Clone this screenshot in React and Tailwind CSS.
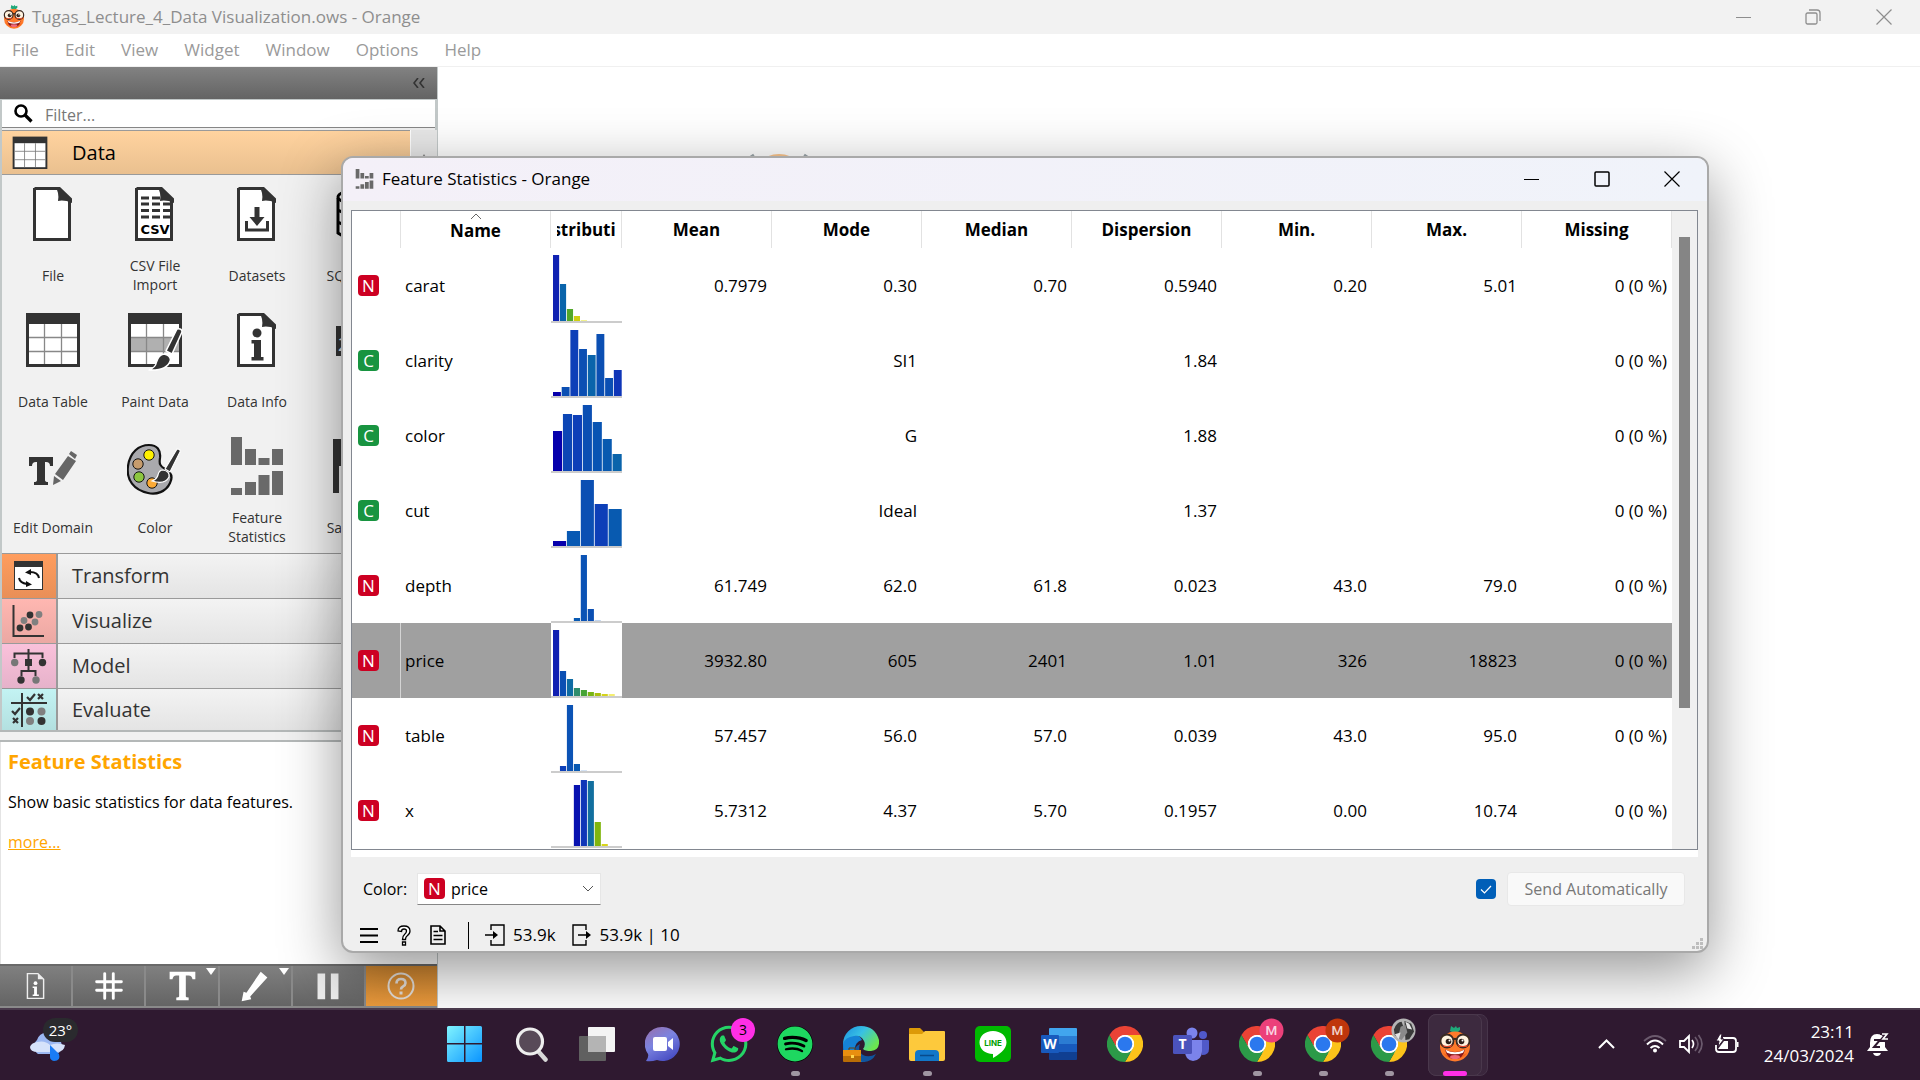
import React from "react";
import { FaSpotify, FaWhatsapp, FaLine } from "react-icons/fa";

const DARK = "#333333";

function OrangeMascot({ className }) {
  return (
    <svg viewBox="0 0 36 36" className={className} aria-hidden="true">
      <path d="M13 5l1-5 3 2 2-2 1 2 3-1v3l-2 2h-6z" fill="#1fa97a" />
      <circle cx="18" cy="20.5" r="15" fill="#ff7a2a" />
      <path d="M6 27a15 15 0 0 0 24 0l-6 3H12z" fill="#f0601c" />
      <path d="M8 23.5q10 5 20 0-2 9.500-10 9.500T8 23.500z" fill="#8a1a1a" />
      <path d="M8.500 23.800q9.500 5 19 0l-1.500 3q-8 3-16 0z" fill="#fff" />
      <ellipse cx="18" cy="31" rx="5" ry="2" fill="#f06a7a" />
      <circle cx="10" cy="15" r="6.500" fill="#fff3e0" stroke="#3a2a22" strokeWidth="1.800" />
      <circle cx="26" cy="15" r="6.500" fill="#fff3e0" stroke="#3a2a22" strokeWidth="1.800" />
      <path d="M4.500 18q5.500 4 11 0l-1.500 3H7zM20.500 18q5.500 4 11 0l-2 3H22z" fill="#e2462a" />
      <path d="M16 14q2-2.500 4 0" fill="none" stroke="#3a2a22" strokeWidth="1.800" />
      <circle cx="11.500" cy="15.500" r="2.800" fill="#30221c" />
      <circle cx="24.500" cy="15.500" r="2.800" fill="#30221c" />
      <circle cx="12.500" cy="14.500" r="1" fill="#fff" />
      <circle cx="25.500" cy="14.500" r="1" fill="#fff" />
    </svg>
  );
}

function Page({ children }) {
  return (
    <svg viewBox="0 0 54 56" className="w-[54px] h-14" aria-hidden="true">
      <path d="M8 2h24l13 13v39H8z" fill="#fff" />
      <path d="M8.500 2.500H32M8.500 2v51.500h35V14" fill="none" stroke={DARK} strokeWidth="3" />
      <path d="M29 1h5l12 11.500V17q-8-3.500-14-2 1.500-9-3-14z" fill={DARK} />
      {children}
    </svg>
  );
}

function GridIcon({ small, paint }) {
  return (
    <svg viewBox="0 0 56 60" className={small ? "w-9 h-9 mt-0.5" : "w-14 h-[60px] mt-1"} preserveAspectRatio="none" aria-hidden="true">
      <rect x="1" y="1" width="54" height="54" fill={DARK} />
      <rect x="4" y="12" width="48" height="40" fill="#fff" />
      {paint && <rect x="4" y="25" width="48" height="15" fill="#b0b0b0" />}
      <path d="M4 25.500h48M4 39.500h48M19.500 12v40M36.500 12v40" stroke={small ? "#777" : "#888"} strokeWidth="1.300" fill="none" />
      {paint && (
        <g stroke="#fff" strokeWidth="1.500" fill={DARK}>
          <path d="M50 17q5-1 5 3L45 42l-6-3z" />
          <path d="M37 42q6 1 6.500 6-3 11-22 10 7-2 8-8 2-7 7.500-8z" />
        </g>
      )}
    </svg>
  );
}

function EditDomainIcon() {
  return (
    <svg viewBox="0 0 56 56" className="w-14 h-14 mt-2" aria-hidden="true">
      <path d="M4 15h24v9h-3q0-4-4-4h-1v18q0 2 3 2v3H9v-3q3 0 3-2V20h-1q-4 0-4 4H4z" fill={DARK} />
      <path d="M29 34l7 5-8 4zM30 32l13-18 8 5-13 19zM44 12l2-3 6 4-2 4z" fill="#666" />
    </svg>
  );
}

function PaletteIcon() {
  return (
    <svg viewBox="0 0 56 56" className="w-14 h-14 mt-2" aria-hidden="true">
      <path d="M21 3C29 3 33 8 32 16c-1 6 0 8 5 11 6 3 8 8 5 14-4 9-14 12-22 10C6 48-2 38 0 24 2 10 11 3 21 3z" fill="#a9a9ad" stroke="#111" strokeWidth="2.200" transform="translate(1 0)" />
      <circle cx="22" cy="13" r="5.200" fill="#fff200" stroke="#111" />
      <circle cx="11" cy="22" r="5.200" fill="#c69c6d" stroke="#111" />
      <circle cx="12" cy="35" r="5.200" fill="#8cc63f" stroke="#111" />
      <circle cx="25" cy="41" r="5.200" fill="#fbaa36" stroke="#111" />
      <g fill={DARK} stroke="#fff" strokeWidth="1.200">
        <path d="M50 7q4 0 3 3L43 30l-5-3z" />
        <path d="M36 28q7 1 6 7-4 8-17 4 5-2 6-6 1-5 5-5z" />
      </g>
    </svg>
  );
}

function StatsIcon({ className }) {
  return (
    <svg viewBox="0 0 52 59" className={className} aria-hidden="true">
      <path fill="#696969" d="M0 0h11v28H0zM14 12h11v16H14zM27.500 21h11v7h-11zM41 12h11v16H41zM0 51h11v7H0zM14 45h11v13H14zM27.500 38h11v20h-11zM41 34h11v24H41z" />
    </svg>
  );
}

const tools = [
  { label: "File", icon: <Page /> },
  {
    label: "CSV File Import",
    icon: (
      <Page>
        <path d="M13 12h8M13 18h8M13 24.500h8M13 31h8M24 12h8M24 18h8M24 24.500h8M24 31h8M35 18h7M35 24.500h7M35 31h7" stroke={DARK} strokeWidth="3" />
        <text x="27" y="48" textAnchor="middle" fontSize="13" fontWeight="700" fontFamily="DejaVu Sans" fill="#000">CSV</text>
      </Page>
    ),
  },
  {
    label: "Datasets",
    icon: (
      <Page>
        <path d="M24.500 21h5v10h5L27 40l-7.500-9h5z" fill={DARK} />
        <path d="M16.500 35v9h21v-9" fill="none" stroke={DARK} strokeWidth="3" />
      </Page>
    ),
  },
  {
    label: "SQL Table",
    icon: (
      <svg viewBox="0 0 54 56" className="w-[54px] h-14" aria-hidden="true">
        <path d="M6 12v35q20 14 42 0V12M6 24q20 12 42 0M6 36q20 12 42 0" fill="#fff" stroke="#000" strokeWidth="3" />
        <ellipse cx="27" cy="11" rx="21" ry="7" fill="#fff" stroke="#000" strokeWidth="3" />
      </svg>
    ),
  },
  { label: "Data Table", icon: <GridIcon /> },
  { label: "Paint Data", icon: <GridIcon paint /> },
  {
    label: "Data Info",
    icon: (
      <Page>
        <circle cx="27" cy="21" r="4.500" fill={DARK} />
        <path d="M21.500 28H31v17h2.500v3.500h-12V45H24V31.500h-2.500z" fill={DARK} />
      </Page>
    ),
  },
  {
    label: "Rank",
    icon: (
      <svg viewBox="0 0 54 56" className="w-[54px] h-14" aria-hidden="true">
        <rect x="4" y="14" width="46" height="30" fill={DARK} />
        <text x="6" y="39" fontSize="18" fontFamily="Noto Sans" fill="#ddd">2</text>
      </svg>
    ),
  },
  { label: "Edit Domain", icon: <EditDomainIcon /> },
  { label: "Color", icon: <PaletteIcon /> },
  { label: "Feature Statistics", icon: <StatsIcon className="w-[52px] h-[59px]" /> },
  {
    label: "Save Data",
    icon: (
      <svg viewBox="0 0 54 56" className="w-[54px] h-14" aria-hidden="true">
        <path d="M1 1h52v54H1z" fill={DARK} />
        <path d="M7 28h40v27H7z" fill="#eee" />
      </svg>
    ),
  },
];

const categories = [
  {
    name: "Transform",
    bg: "bg-linear-to-b from-[#ff9d5e] to-[#e98f57]",
    icon: (
      <>
        <rect x="3.500" y="3.500" width="28" height="28" fill="#fff" stroke={DARK} />
        <rect x="3" y="3" width="29" height="6" fill={DARK} />
        <path d="M8 20q1 5 8 6M28 20q-1-6-9-6" fill="none" stroke="#111" strokeWidth="2" />
        <path d="M20 11v6l-6-2.500zM15 23v6l6-2.500z" fill="#111" />
      </>
    ),
  },
  {
    name: "Visualize",
    bg: "bg-linear-to-b from-[#ffb7b1] to-[#eba8a3]",
    icon: (
      <>
        <path d="M2.500 2v31H33" fill="none" stroke={DARK} strokeWidth="2" />
        <g fill={DARK}><circle cx="19" cy="12" r="3.400" /><circle cx="9" cy="25" r="3.400" /><circle cx="17.500" cy="24" r="3.400" /></g>
        <g fill="#808080"><circle cx="28" cy="11.500" r="3.400" /><circle cx="13" cy="17.500" r="3.400" /><circle cx="24" cy="19" r="3.400" /></g>
      </>
    ),
  },
  {
    name: "Model",
    bg: "bg-linear-to-b from-[#fac1db] to-[#e6b2ca]",
    icon: (
      <>
        <path d="M17.500 1v10M17.500 18v5M3.500 10V5.500h28V10M10.500 28v-5h14v5" fill="none" stroke={DARK} strokeWidth="2" />
        <rect x="14" y="11" width="7" height="7" fill={DARK} />
        <g fill={DARK}><circle cx="31.500" cy="14.500" r="3.700" /><circle cx="10" cy="32" r="3.700" /></g>
        <g fill="#777"><circle cx="3.700" cy="14.500" r="3.700" /><circle cx="25" cy="32" r="3.700" /></g>
      </>
    ),
  },
  {
    name: "Evaluate",
    bg: "bg-linear-to-b from-[#c3f3f3] to-[#b3e0e0]",
    icon: (
      <>
        <path d="M0 11h36M11 1v34" stroke={DARK} strokeWidth="2" />
        <path d="M16 5l3 3 5-6M1 19l3 3 5-6M27 2l5 5M32 2l-5 5M2 26l5 5M7 26l-5 5" fill="none" stroke={DARK} strokeWidth="2.200" />
        <g fill={DARK}><circle cx="19" cy="19.500" r="4" /><circle cx="30.500" cy="29" r="4" /></g>
        <g fill="#808080"><circle cx="30.500" cy="19.500" r="4" /><circle cx="19" cy="29" r="4" /></g>
      </>
    ),
  },
];

const B1 = "#0b4fb3";
const B0 = "#0d3fb8";
const NAVY = "#0600ac";
const TEAL = "#0a64ab";

const rows = [
  { t: "N", name: "carat", v: ["0.7979", "0.30", "0.70", "0.5940", "0.20", "5.01"], n: 10, s: 0, bars: [[66, "#1022b2"], [37, TEAL], [12, "#52a829"], [5, "#cfcf12"], [1, "#f2f28c"]] },
  { t: "C", name: "clarity", v: ["", "SI1", "", "1.84", "", ""], n: 8, s: 0, bars: [[4, NAVY], [9, B1], [66, B0], [47, B1], [41, TEAL], [62, B1], [18, B1], [26, "#0f36b8"]] },
  { t: "C", name: "color", v: ["", "G", "", "1.88", "", ""], n: 7, s: 0, bars: [[40, NAVY], [57, "#0c46b5"], [56, B0], [66, B1], [49, "#0854b3"], [32, "#085ab0"], [17, TEAL]] },
  { t: "C", name: "cut", v: ["", "Ideal", "", "1.37", "", ""], n: 5, s: 0, bars: [[5, NAVY], [15, "#0859b3"], [66, B1], [42, B0], [37, "#085ab0"]] },
  { t: "N", name: "depth", v: ["61.749", "62.0", "61.8", "0.023", "43.0", "79.0"], n: 10, s: 3, bars: [[3, "#0859b3"], [66, "#0b53b5"], [12, B1], [1, "#c0d4ee"]] },
  { t: "N", name: "price", v: ["3932.80", "605", "2401", "1.01", "326", "18823"], n: 10, s: 0, sel: true, bars: [[66, "#1020b2"], [25, "#0b4fb3"], [17, "#0f6ca4"], [8, "#2f8d6d"], [6, "#45a335"], [4, "#78b414"], [3, "#a9bf0d"], [2, "#d4d21c"], [2, "#f4ee70"]] },
  { t: "N", name: "table", v: ["57.457", "56.0", "57.0", "0.039", "43.0", "95.0"], n: 10, s: 1, bars: [[5, B0], [66, "#0b53b5"], [7, "#0859b3"], [1, "#d4e2f4"]] },
  { t: "N", name: "x", v: ["5.7312", "4.37", "5.70", "0.1957", "0.00", "10.74"], n: 10, s: 3, bars: [[61, "#0812b0"], [66, "#0f36b8"], [65, "#126f9f"], [24, "#80b60d"], [2, "#d8d41c"]] },
];

function Histogram({ n, s, bars, name }) {
  const pitch = 69.5 / n;
  return (
    <svg viewBox="0 0 71 75" className="block w-[71px] h-[75px] bg-white" role="img" aria-label={"Distribution of " + name}>
      {bars.map(([h, c], i) => (
        <rect key={i} x={2 + (s + i) * pitch} y={73 - h} width={pitch - 0.8} height={h} fill={c} />
      ))}
      <rect x="0" y="73" width="71" height="2" fill="#cccccc" />
    </svg>
  );
}

function TypeBadge({ t }) {
  return (
    <span className={(t === "N" ? "bg-[#cd0022]" : "bg-[#189440]") + " flex items-center justify-center w-[21px] h-[21px] rounded-sm text-white text-[17px] leading-none"}>
      {t}
    </span>
  );
}

const columns = ["Mean", "Mode", "Median", "Dispersion", "Min.", "Max.", "Missing"];

function StatsDialog() {
  return (
    <section className="absolute z-10 left-[341px] right-[211px] top-[156px] bottom-[127px] flex flex-col rounded-xl border-2 border-[#a9a9a9] bg-[#efefef] overflow-hidden shadow-[0_18px_60px_rgba(0,0,0,0.42)] text-black">
      <header className="h-[43px] shrink-0 flex items-center bg-linear-to-r from-[#f4f0f8] to-[#f0f3fa] pl-3 pb-0.5 text-[17px]">
        <StatsIcon className="w-[19px] h-5 mr-2" />
        <h1 className="grow">Feature Statistics - Orange</h1>
        <button aria-label="Minimize" className="w-[70px] flex justify-center"><svg className="w-4 h-4" viewBox="0 0 16 16"><path d="M0 8.500h15" stroke="#000" /></svg></button>
        <button aria-label="Maximize" className="w-[70px] flex justify-center"><svg className="w-4 h-4" viewBox="0 0 16 16"><rect x="1" y="1" width="14" height="14" rx="1" fill="none" stroke="#000" strokeWidth="1.500" /></svg></button>
        <button aria-label="Close" className="w-[70px] flex justify-center"><svg className="w-4 h-4" viewBox="0 0 16 16"><path d="M.5.5l15 15M15.500.5l-15 15" stroke="#000" strokeWidth="1.200" /></svg></button>
      </header>

      <div className="grow min-h-0 ml-2 mr-[9px] mt-[9px] flex flex-col bg-white">
        <div className="grow min-h-0 flex border border-[#828790] overflow-hidden">
          <div className="grow min-w-0">
            <table className="w-full table-fixed border-separate border-spacing-0 text-[17px] leading-6">
              <colgroup>
                <col className="w-[49px]" /><col className="w-[150px]" /><col className="w-[71px]" />
                {columns.map((c) => <col key={c} />)}
              </colgroup>
              <thead>
                <tr className="h-[37px] font-bold">
                  <th className="border-r border-[#e2e2e2] p-0" aria-label="Type" />
                  <th className="border-r border-[#e2e2e2] p-0 align-top">
                    <svg viewBox="0 0 12 7" className="block w-3 h-[7px] mx-auto mt-0.5" aria-hidden="true"><path d="M1 6l5-5 5 5" fill="none" stroke="#666" /></svg>
                    <span className="block leading-[22px]">Name</span>
                  </th>
                  <th className="border-r border-[#e2e2e2] p-0">
                    <span className="flex justify-center overflow-hidden mx-1.5"><span>Distribution</span></span>
                  </th>
                  {columns.map((c) => <th key={c} className="border-r border-[#e2e2e2] p-0">{c}</th>)}
                </tr>
              </thead>
              <tbody>
                {rows.map((r) => (
                  <tr key={r.name} className={(r.sel ? "bg-[#a0a0a0]" : "bg-white") + " h-[75px]"}>
                    <td className={(r.sel ? "border-r border-[#d4d4d4]" : "") + " p-0 pl-1.5"}><TypeBadge t={r.t} /></td>
                    <td className="p-0 pl-1">{r.name}</td>
                    <td className="p-0"><Histogram {...r} /></td>
                    {r.v.map((v, i) => <td key={i} className="p-0 pr-[5px] text-right">{v}</td>)}
                    <td className="p-0 pr-[5px] text-right">0 (0 %)</td>
                  </tr>
                ))}
              </tbody>
            </table>
          </div>
          <div className="w-[25px] shrink-0 bg-[#f0f0f0] pt-[26px] flex justify-center">
            <div className="w-[11px] h-[77%] bg-[#858585]" />
          </div>
        </div>
        <div className="h-[7px] shrink-0" />
      </div>

      <div className="shrink-0 h-16 pl-5 pr-[22px] flex items-center text-[16px]">
        <label htmlFor="color" className="w-[54px]">Color:</label>
        <div className="relative">
          <select id="color" defaultValue="price" className="appearance-none w-[184px] h-8 bg-white border border-[#e6e6e6] border-b-[#868686] pl-[33px] text-[16px] outline-none">
            <option value="price">price</option>
            <option value="carat">carat</option>
          </select>
          <span className="absolute left-[7px] top-[5px] pointer-events-none"><TypeBadge t="N" /></span>
          <svg viewBox="0 0 12 7" className="absolute right-[7px] top-3 w-3 h-[7px] pointer-events-none" aria-hidden="true"><path d="M1 1l5 5 5-5" fill="none" stroke="#555" /></svg>
        </div>
        <div className="grow" />
        <label className="relative w-5 h-5 mr-[11px]">
          <input type="checkbox" defaultChecked aria-label="Send automatically" className="appearance-none block w-5 h-5 rounded-sm bg-[#005fb8]" />
          <svg viewBox="0 0 20 20" className="absolute inset-0 w-5 h-5 pointer-events-none" aria-hidden="true"><path d="M5 10.500l3.500 3.500L15 7" fill="none" stroke="#fff" strokeWidth="1.200" /></svg>
        </label>
        <button className="w-[178px] h-[34px] rounded-sm border border-[#e8e8e8] bg-[#f9f9f9] text-[#777]">Send Automatically</button>
      </div>

      <footer className="shrink-0 h-[30px] pl-[17px] pr-1 pb-0.5 flex items-center text-[17px]">
        <button aria-label="Menu" className="mr-[19px]"><svg viewBox="0 0 18 16" className="w-[18px] h-4"><path d="M0 2h18M0 8.500h18M0 15h18" stroke="#000" strokeWidth="2" /></svg></button>
        <button aria-label="Help" className="mr-[19px]">
          <svg viewBox="0 0 14 21" className="w-3.5 h-[21px]"><path d="M1 6Q1 1 7 1t6 5q0 3-3 5-1.500 1-1.500 3.500h-3Q5.500 11 7.500 9.500 9.500 8 9.500 6 9.500 4 7 4T4.500 6.500L1 6zM5.500 17h3v3h-3z" fill="#fff" stroke="#000" strokeWidth="1.300" /></svg>
        </button>
        <button aria-label="Report" className="mr-[22px]">
          <svg viewBox="0 0 16 20" className="w-4 h-5"><path d="M1 1h9l5 5v13H1zM10 1v5h5M3.500 6.500H8M3.500 10.500h9M3.500 14.500h9" fill="none" stroke="#000" strokeWidth="1.600" /></svg>
        </button>
        <span className="w-px h-[27px] bg-black mr-4" />
        <button className="flex items-center gap-2 mr-4">
          <svg viewBox="0 0 20 22" className="w-5 h-[22px]"><path d="M6 6V1h13v20H6v-5M0 11h11" fill="none" stroke="#000" strokeWidth="1.400" /><path d="M8 7l5 4-5 4z" /></svg>
          53.9k
        </button>
        <button className="flex items-center gap-2">
          <svg viewBox="0 0 20 22" className="w-5 h-[22px]"><path d="M14 6V1H1v20h13v-5M6 11h11" fill="none" stroke="#000" strokeWidth="1.400" /><path d="M14 7l5 4-5 4z" /></svg>
          53.9k | 10
        </button>
        <div className="grow" />
        <svg viewBox="0 0 11 11" className="w-[11px] h-[11px] self-end" aria-hidden="true"><path fill="#bdbdbd" d="M8 0h3v3H8zM4 4h3v3H4zM8 4h3v3H8zM0 8h3v3H0zM4 8h3v3H4zM8 8h3v3H8z" /></svg>
      </footer>
    </section>
  );
}

const canvasTools = [
  { name: "Info", svg: <><path d="M9 8h11l6 6v20H9z" fill="none" stroke="#eee" strokeWidth="1.500" /><path d="M20 8v6h6z" fill="#eee" /><circle cx="17.500" cy="18" r="2" fill="#fff" /><path d="M14.500 21.500H19V30h2v1.500h-6.500V30H16v-7h-1.500z" fill="#fff" /></> },
  { name: "Grid", svg: <path d="M13.500 8v26M22.500 8v26M5 16.500h26M5 25.500h26" stroke="#fff" strokeWidth="3" strokeLinecap="round" fill="none" /> },
  { name: "Text", menu: true, svg: <path d="M5 6h27v8h-3q-.5-4-4-4h-3v22q0 1 3 1v3H12v-3q3 0 3-1V10h-3q-3.500 0-4 4H5z" fill="#fff" /> },
  { name: "Arrow", menu: true, svg: <path d="M24 6l7 6-18 20 1 3-10 2 2-10 3 1z" fill="#fff" /> },
  { name: "Pause", svg: <path d="M7 8h8v27H7zM21 8h8v27h-8z" fill="#eee" /> },
];

function Sidebar() {
  return (
    <aside className="w-[438px] shrink-0 flex flex-col border-r border-[#c2c8c8] bg-[#f1f1f1]">
      <div className="h-8 shrink-0 flex items-center justify-end pr-3 bg-linear-to-b from-[#828282] to-[#646464]">
        <button aria-label="Collapse"><svg viewBox="0 0 12 10" className="w-3 h-2.5"><path d="M5 0L1 5l4 5M11 0L7 5l4 5" fill="none" stroke="#333" strokeWidth="1.600" /></svg></button>
      </div>
      <div className="h-[31px] shrink-0 border-x-2 border-t border-[#c2c8c8] bg-[#efefef] pb-0.5">
        <label className="flex items-center h-full bg-white border-b border-[#868686] pl-3">
          <svg viewBox="0 0 19 19" className="w-[19px] h-[19px] mr-3" aria-hidden="true"><circle cx="7" cy="7" r="5.500" fill="none" stroke="#000" strokeWidth="2.600" /><path d="M11 11l6.500 6.500" stroke="#000" strokeWidth="3.200" /></svg>
          <input type="text" placeholder="Filter..." aria-label="Filter" className="grow outline-none bg-transparent pt-0.5 text-[16px] placeholder:text-[#777]" />
        </label>
      </div>
      <div className="shrink-0 flex border-l-2 border-[#c2c8c8] overflow-hidden">
        <div className="w-[408px] shrink-0">
          <button className="w-full h-[45px] flex items-center border-y border-[#9a9a9a] bg-linear-to-b from-[#ffd39f] to-[#eac08f] text-xl leading-6">
            <span className="w-[54px] ml-2.5 text-left"><GridIcon small /></span>
            <span className="ml-1.5">Data</span>
          </button>
          <div className="grid grid-cols-4 text-[#333]">
            {tools.map((t) => (
              <button key={t.label} className="h-[126px] flex flex-col items-center">
                <span className="h-[78px] flex items-center">{t.icon}</span>
                <span className="h-11 w-[92px] flex items-center justify-center text-center text-[14px] leading-[19px]">{t.label}</span>
              </button>
            ))}
          </div>
          {categories.map((c) => (
            <button key={c.name} className="w-full h-[45px] last:h-[42px] flex items-stretch border-t border-[#9a9a9a] text-xl text-[#333] bg-linear-to-b from-[#f3f3f3] to-[#e4e4e4]">
              <span className={c.bg + " w-14 border-r-2 border-[#9a9a9a] flex items-center justify-center"}>
                <svg viewBox="0 0 36 36" className="w-9 h-9" aria-hidden="true">{c.icon}</svg>
              </span>
              <span className="pl-3.5 self-center">{c.name}</span>
            </button>
          ))}
        </div>
        <div className="grow bg-[#e8e8e8] border-l border-white">
          <svg viewBox="0 0 10 8" className="w-2.5 h-2 mx-auto mt-6" aria-hidden="true"><path d="M0 8h10L5 0z" fill="#858585" /></svg>
        </div>
      </div>
      <div className="h-3 shrink-0 border-y-2 border-[#b4b8b8] bg-[#f1f1f1]" />
      <div className="grow min-h-0 bg-white border-l border-[#e4e4e4] px-[7px] pt-2">
        <h2 className="text-xl leading-6 font-bold text-[#ffa500]">Feature Statistics</h2>
        <p className="text-[16px] leading-6 mt-4 text-black">Show basic statistics for data features.</p>
        <a href="#more" className="block text-[16px] leading-6 mt-4 text-[#ffa500] underline">more...</a>
      </div>
      <div className="h-11 shrink-0 flex border-t-2 border-b-2 border-t-[#6a6a6a] border-b-[#8a8a8a]">
        {canvasTools.map((t) => (
          <button key={t.name} aria-label={t.name} className="relative flex-1 flex items-center justify-center border-r-2 border-[#8a8a8a] bg-linear-to-b from-[#808080] to-[#646464]">
            <svg viewBox="0 0 36 42" className="w-9 h-10" aria-hidden="true">{t.svg}</svg>
            {t.menu && <svg viewBox="0 0 10 7" className="absolute right-0.5 top-0.5 w-2.5 h-[7px]" aria-hidden="true"><path d="M0 0h10L5 7z" fill="#fff" /></svg>}
          </button>
        ))}
        <button aria-label="Help" className="flex-1 flex items-center justify-center bg-linear-to-b from-[#cc8530] to-[#ee9c3d]">
          <svg viewBox="0 0 28 28" className="w-7 h-7" aria-hidden="true">
            <circle cx="14" cy="14" r="12.500" fill="none" stroke="#e6e0da" strokeWidth="2" />
            <path d="M9.500 11.500Q9.500 7 14 7t4.500 4q0 2-2.500 3.500-2 1-2 3" fill="none" stroke="#e6e0da" strokeWidth="2.600" />
            <rect x="12.500" y="19.500" width="3" height="3" fill="#e6e0da" />
          </svg>
        </button>
      </div>
    </aside>
  );
}

function Chrome() {
  return (
    <svg viewBox="0 0 48 48" className="w-9 h-9" aria-hidden="true">
      <circle cx="24" cy="24" r="14" fill="#fff" />
      <path d="M3.200 12A24 24 0 0 1 44.800 12H24A12 12 0 0 0 13.600 30z" fill="#ea4335" />
      <path d="M44.800 12A24 24 0 0 1 24 48l10.400-18A12 12 0 0 0 24 12z" fill="#fcc31a" />
      <path d="M24 48A24 24 0 0 1 3.200 12l10.400 18a12 12 0 0 0 20.800 0z" fill="#2c9a48" />
      <circle cx="24" cy="24" r="12" fill="#fff" />
      <circle cx="24" cy="24" r="9.800" fill="#2b78ee" />
    </svg>
  );
}

function ChromeProfile({ color, photo }) {
  return (
    <>
      <Chrome />
      <svg viewBox="0 0 26 26" className="absolute -top-2 left-5 w-[25px] h-[25px]" aria-hidden="true">
        <circle cx="13" cy="13" r="12.500" fill={color} />
        {photo ? (
          <>
            <path d="M3 12q3-8 8-8l3 8-4 9-6-3zM14 3l7 3 3 8-5 8-4 1z" fill="#3a3a3a" />
            <path d="M10 9l5-2 2 8-6 8-4-2z" fill="#8a8a8a" />
            <path d="M15 4l2 7 5 1-3-6zM4 17l6-2-2 7z" fill="#e4e4e4" />
          </>
        ) : (
          <text x="13" y="18" fontSize="14" fontFamily="Roboto" fontWeight="500" textAnchor="middle" fill="#fff" fillOpacity="0.800">M</text>
        )}
      </svg>
    </>
  );
}

const apps = [
  {
    name: "Start",
    icon: (
      <svg viewBox="0 0 36 36" className="w-9 h-9">
        <defs><linearGradient id="win" x1="0" y1="0" x2="1" y2="1"><stop offset="0" stopColor="#80f4ff" /><stop offset="1" stopColor="#0a94ff" /></linearGradient></defs>
        <path d="M1.500 0H17v17H0V1.500Q0 0 1.500 0zM18.500 0h15q1.500 0 1.500 1.500V17H18.500zM0 18.500h17V36H1.500Q0 36 0 34.500zM18.500 18.500H35v16q0 1.500-1.500 1.500h-15z" fill="url(#win)" />
      </svg>
    ),
  },
  {
    name: "Search",
    icon: (
      <svg viewBox="0 0 36 36" className="w-9 h-9">
        <path d="M25 25l7.500 8.500" stroke="#d8d8d8" strokeWidth="4.500" strokeLinecap="round" />
        <circle cx="17" cy="15.500" r="12.500" fill="#584a58" stroke="#eee" strokeWidth="3.200" />
      </svg>
    ),
  },
  {
    name: "Task view",
    icon: (
      <svg viewBox="0 0 36 36" className="w-9 h-9">
        <rect x="9" y="1" width="27" height="25" rx="1" fill="#f4f4f4" />
        <rect x="0" y="10" width="27" height="25" rx="1" fill="#606060" />
        <path d="M9 10h18v16H9z" fill="#b4b4b4" />
      </svg>
    ),
  },
  {
    name: "Chat",
    icon: (
      <svg viewBox="0 0 36 36" className="w-9 h-9">
        <defs><linearGradient id="chat" x1="0" y1="0" x2="0.600" y2="1"><stop offset="0" stopColor="#9a6ea8" /><stop offset="0.500" stopColor="#7b83e0" /><stop offset="1" stopColor="#4a4fc4" /></linearGradient></defs>
        <path d="M18 1a17 17 0 1 1-6 33q-6 2-11 1 3-4 2-7A17 17 0 0 1 18 1z" fill="url(#chat)" />
        <rect x="8" y="11" width="14" height="14" rx="2" fill="#fff" />
        <path d="M23 16l5-4v12l-5-4z" fill="#fff" />
      </svg>
    ),
  },
  {
    name: "WhatsApp",
    icon: (
      <>
        <FaWhatsapp className="w-[42px] h-[42px] shrink-0 text-[#25d366]" />
        <span className="absolute -top-2 left-5 w-6 h-6 rounded-full bg-[#ff2fe6] text-black text-[14px] leading-6 text-center">3</span>
      </>
    ),
  },
  { name: "Spotify", dot: true, icon: <span className="block rounded-full bg-black"><FaSpotify className="w-9 h-9 text-[#1ed760]" /></span> },
  {
    name: "Edge",
    icon: (
      <svg viewBox="0 0 36 36" className="w-9 h-9">
        <defs>
          <linearGradient id="edgeTop" x1="0" y1="0" x2="1" y2="0.600"><stop offset="0" stopColor="#1a8fe0" /><stop offset="0.500" stopColor="#38c1e4" /><stop offset="1" stopColor="#6be650" /></linearGradient>
        </defs>
        <path d="M0 17Q3 9 11 9q6 0 8 5-7 2-7 9 1 11 11 13H2Q0 30 0 17z" fill="#1583d6" />
        <path d="M17 18q-3 7 3 11 6 3 13-1-4 8-13 8-8-1-9-10 1-6 6-8z" fill="#10559e" />
        <path d="M0 18A18 18 0 0 1 18 0q14 0 18 14 1 10-8 11-6 0-8-2 3-4 1-8-3-6-10-5Q2 11 0 18z" fill="url(#edgeTop)" />
        <path d="M0 24h18v12H1q-1 0-1-1z" fill="#b96d06" />
        <path d="M0 24h18v6H0z" fill="#e88f10" />
        <path d="M6 24v-2h6v2" fill="none" stroke="#6b3c06" />
        <rect x="8" y="29" width="3" height="3" fill="#ffd54a" />
      </svg>
    ),
  },
  {
    name: "File Explorer",
    dot: true,
    icon: (
      <svg viewBox="0 0 36 36" className="w-9 h-9">
        <path d="M0 3q0-1 1-1h10l4 4v5H0z" fill="#dd9a08" />
        <path d="M0 8h13l3-3h19q1 0 1 1v27q0 2-2 2H2q-2 0-2-2z" fill="#fdc93c" />
        <path d="M6 35v-7q0-4 4-4h16q4 0 4 4v7z" fill="#1277c8" />
        <path d="M11 29.500h14" stroke="#084b8c" strokeWidth="1.500" />
      </svg>
    ),
  },
  {
    name: "LINE",
    icon: (
      <svg viewBox="0 0 36 36" className="w-9 h-9">
        <rect width="36" height="36" rx="5" fill="#00b900" />
        <path d="M18 5c8 0 13.500 5 13.500 11.500 0 7-8 12.500-13.500 15.500v-4C10 28 4.500 23 4.500 16.500S10 5 18 5z" fill="#fff" />
        <text x="18" y="20" fontSize="8" fontWeight="700" fontFamily="Inter" textAnchor="middle" fill="#00a000">LINE</text>
      </svg>
    ),
  },
  {
    name: "Word",
    icon: (
      <svg viewBox="0 0 36 36" className="w-9 h-9">
        <path d="M8 3q0-1 1-1h26q1 0 1 1v7H8z" fill="#41a5ee" />
        <path d="M8 10h28v8H8z" fill="#2b7cd3" />
        <path d="M8 18h28v8H8z" fill="#185abd" />
        <path d="M8 26h28v7q0 1-1 1H9q-1 0-1-1z" fill="#103f91" />
        <rect x="0" y="9" width="18" height="18" rx="1" fill="#185abd" />
        <text x="9" y="23" fontSize="14" fontWeight="700" fontFamily="Noto Sans" textAnchor="middle" fill="#fff">W</text>
      </svg>
    ),
  },
  { name: "Chrome", icon: <Chrome /> },
  {
    name: "Teams",
    icon: (
      <svg viewBox="0 0 36 36" className="w-9 h-9">
        <circle cx="30" cy="9" r="4" fill="#5059c9" />
        <path d="M26 14h9q1 0 1 1v8q0 6-7 6z" fill="#5059c9" />
        <circle cx="19" cy="7" r="5.500" fill="#7b83eb" />
        <path d="M12 14h17v11q0 9-9 10-8-1-8-10z" fill="#7b83eb" />
        <rect x="0" y="9" width="19" height="19" rx="1.500" fill="#4b53bc" />
        <text x="9.500" y="23" fontSize="14" fontWeight="700" fontFamily="Noto Sans" textAnchor="middle" fill="#fff">T</text>
      </svg>
    ),
  },
  { name: "Chrome profile 1", dot: true, icon: <ChromeProfile color="#ec407a" /> },
  { name: "Chrome profile 2", dot: true, icon: <ChromeProfile color="#bf360c" /> },
  { name: "Chrome profile 3", dot: true, icon: <ChromeProfile color="#b4b4b4" photo /> },
  { name: "Orange", active: true, icon: <OrangeMascot className="w-9 h-9" /> },
];

function Taskbar() {
  return (
    <footer className="relative z-20 h-[72px] shrink-0 grid grid-cols-[1fr_auto_1fr] bg-[#2f1930] border-t-2 border-[#4a3a4c] text-white">
      <button aria-label="Weather" className="relative justify-self-start self-start ml-7 mt-2 w-14 h-14">
        <svg viewBox="0 0 56 56" className="w-14 h-14" aria-hidden="true">
          <path d="M10 36a9 9 0 0 1-1-14 11 11 0 0 1 20-2 9 9 0 0 1 0 16z" fill="#9cb8f2" />
          <path d="M9 24q8-2 13 3 7-3 15 0-1 7-8 7H10q-8 0-8-5 1-4 7-5z" fill="#d6e2fa" />
          <path d="M22 27l9 9q2 7-5 7-4-1-4-4z" fill="#1a7cf5" />
        </svg>
        <span className="absolute left-[15px] top-0 w-[35px] h-6 rounded-full bg-[#2a2a2e] text-[15px] leading-6 text-center">23°</span>
      </button>
      <nav className="flex">
        {apps.map((a) => (
          <button key={a.name} aria-label={a.name} className="relative w-[66px] flex items-center justify-center pb-0.5">
            {a.active && <span className="absolute inset-y-1 left-1.5 right-0 rounded-lg border border-[#47354a] bg-[#3a263c]" />}
            {a.active && <span className="absolute inset-y-1 left-1.5 right-1.5 rounded-lg border border-[#4a384c] bg-[#3d2a3f]" />}
            <span className="relative flex items-center justify-center w-9 h-9">{a.icon}</span>
            {a.dot && <span className="absolute bottom-1 w-[9px] h-[5px] rounded-full bg-[#a096a2]" />}
            {a.active && <span className="absolute bottom-1 w-6 h-[5px] rounded-full bg-[#ff2fe6]" />}
          </button>
        ))}
      </nav>
      <div className="justify-self-end flex items-center pr-[30px] pb-0.5">
        <button aria-label="Hidden icons" className="mr-7"><svg viewBox="0 0 17 10" className="w-[17px] h-2.5"><path d="M1 9l7.500-7.500L16 9" fill="none" stroke="#fff" strokeWidth="2" /></svg></button>
        <button aria-label="Network, sound and battery" className="flex items-center gap-3 mr-[25px]">
          <svg viewBox="0 0 24 20" className="w-6 h-5"><path d="M1 7Q12-3 23 7" fill="none" stroke="#6b5a6d" strokeWidth="1.800" /><path d="M4 10.500q8-8 16 0M7.500 14q4.500-4 9 0" fill="none" stroke="#fff" strokeWidth="2" /><circle cx="12" cy="16.500" r="2" fill="#fff" /></svg>
          <svg viewBox="0 0 24 20" className="w-6 h-5"><path d="M1 7h4l5-5v16l-5-5H1z" fill="none" stroke="#fff" strokeWidth="1.800" /><path d="M13 6q3 4 0 8" fill="none" stroke="#fff" strokeWidth="1.700" /><path d="M16 3q6 7 0 14M19.500 1q7 9 0 18" fill="none" stroke="#6b5a6d" strokeWidth="1.700" /></svg>
          <svg viewBox="0 0 24 20" className="w-6 h-5"><path d="M8 4h10q3 0 3 3v8q0 3-3 3H4q-3 0-3-3v-4" fill="none" stroke="#fff" strokeWidth="1.800" /><path d="M22 8h1.500v5H22zM9 7h4v8H3z" fill="#fff" /><path d="M5 0L1 7h3l-1 6 6-8H6l1-5z" fill="#fff" stroke="#2f1930" /></svg>
        </button>
        <button className="text-right text-[17px] leading-6 mr-3">23:11<br />24/03/2024</button>
        <button aria-label="Notifications">
          <svg viewBox="0 0 24 26" className="w-6 h-[26px]">
            <path d="M11 3q8 0 8 9v4l3 4H1l3-4v-4q0-9 7-9zM7 22h8q-1 3-4 3t-4-3z" fill="#fff" />
            <path d="M8 9h6l-6 7h6" fill="none" stroke="#2f1930" strokeWidth="2" />
            <path d="M14 2h8l-6 7h7" fill="none" stroke="#2f1930" strokeWidth="4" />
            <path d="M16 3h5l-4 5h5" fill="none" stroke="#fff" strokeWidth="1.600" />
          </svg>
        </button>
      </div>
    </footer>
  );
}

export default function App() {
  return (
    <div className="relative h-screen flex flex-col overflow-hidden bg-white font-['Open_Sans','Noto_Sans',sans-serif]">
      <header className="h-[34px] shrink-0 flex items-center bg-[#f2f2f2] pl-0.5 text-[17px] text-[#8e8e8e]">
        <OrangeMascot className="w-6 h-6 mr-1.5" />
        <span className="grow">Tugas_Lecture_4_Data Visualization.ows - Orange</span>
        <button aria-label="Minimize" className="w-[69px] flex justify-center"><svg className="w-4 h-4" viewBox="0 0 16 16"><path d="M0 8.500h15" stroke="#8e8e8e" /></svg></button>
        <button aria-label="Restore" className="w-[69px] flex justify-center"><svg className="w-4 h-4" viewBox="0 0 16 16" fill="none" stroke="#8e8e8e" strokeWidth="1.300"><rect x="1" y="4" width="11" height="11" rx="1.500" /><path d="M4 1h8q3 0 3 3v8" /></svg></button>
        <button aria-label="Close" className="w-[73px] flex justify-center"><svg className="w-4 h-4" viewBox="0 0 16 16"><path d="M.5.5l15 15M15.500.5l-15 15" stroke="#8e8e8e" strokeWidth="1.200" /></svg></button>
      </header>
      <nav className="h-[33px] shrink-0 flex items-center gap-[26px] pl-3 border-b border-[#f0f0f0] text-[17px] text-[#9a9a9a]">
        {["File", "Edit", "View", "Widget", "Window", "Options", "Help"].map((m) => <button key={m}>{m}</button>)}
      </nav>
      <div className="grow min-h-0 flex">
        <Sidebar />
        <main className="grow bg-white pl-[309px] pt-[85px]">
          <svg viewBox="0 0 64 64" className="w-16 h-16" aria-hidden="true">
            <circle cx="32" cy="31" r="29" fill="#fcc58c" />
            <path d="M1 7l6-4M63 7l-6-4" stroke="#9aa4a8" strokeWidth="3" />
          </svg>
        </main>
      </div>
      <StatsDialog />
      <Taskbar />
    </div>
  );
}
